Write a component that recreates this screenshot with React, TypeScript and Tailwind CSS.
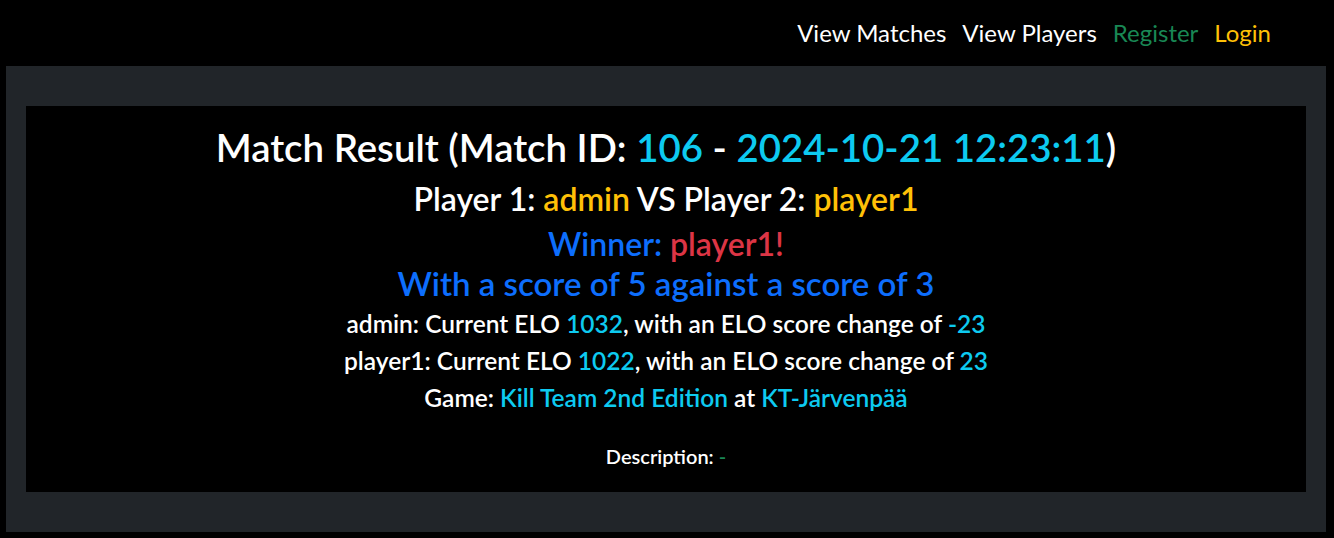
const Nav = () => (
  <nav className="h-[66px] flex items-center justify-end gap-4 pr-[63px] text-[24px]">
    <a className="text-white">View Matches</a>
    <a className="text-white">View Players</a>
    <a className="text-[#198754]">Register</a>
    <a className="text-[#ffc107]">Login</a>
  </nav>
);

export default function App() {
  return (
    <div
      className="min-h-screen bg-black text-white"
      style={{ fontFamily: 'Lato, "Open Sans", sans-serif' }}
    >
      <Nav />
      {/* main panel */}
      <div className="ml-[6px] mr-2 bg-[#212529] px-5 pt-10 pb-10">
        <div className="bg-black flex flex-col items-center text-center pt-[17px] pb-[24px] font-semibold">
          <h2 className="text-[38.4px] leading-[48px]">
            Match Result (Match ID: <span className="text-[#0dcaf0]">106</span> -{" "}
            <span className="text-[#0dcaf0]">2024-10-21 12:23:11</span>)
          </h2>
          <h4 className="mt-[10px] text-[32px] leading-[36px]">
            Player 1: <span className="text-[#ffc107]">admin</span> VS Player 2:{" "}
            <span className="text-[#ffc107]">player1</span>
          </h4>
          <h4 className="mt-[9px] text-[32px] leading-[36px] text-[#0d6efd]">
            Winner: <span className="text-[#dc3545]">player1!</span>
          </h4>
          <h3 className="text-[33px] leading-[42px] text-[#0d6efd]">
            With a score of 5 against a score of 3
          </h3>
          <h5 className="mt-[5px] text-[24.5px] leading-[30px]">
            admin: Current ELO <span className="text-[#0dcaf0]">1032</span>, with an ELO score change of{" "}
            <span className="text-[#0dcaf0]">-23</span>
          </h5>
          <h5 className="mt-[7px] text-[24.5px] leading-[30px]">
            player1: Current ELO <span className="text-[#0dcaf0]">1022</span>, with an ELO score change of{" "}
            <span className="text-[#0dcaf0]">23</span>
          </h5>
          <h5 className="mt-[7px] text-[24.5px] leading-[30px]">
            Game: <span className="text-[#0dcaf0]">Kill Team 2nd Edition</span> at{" "}
            <span className="text-[#0dcaf0]">KT-Järvenpää</span>
          </h5>
          <h6 className="mt-[31px] text-[20px] leading-[24px]">
            Description: <span className="text-[#198754]">-</span>
          </h6>
        </div>
      </div>
    </div>
  );
}
